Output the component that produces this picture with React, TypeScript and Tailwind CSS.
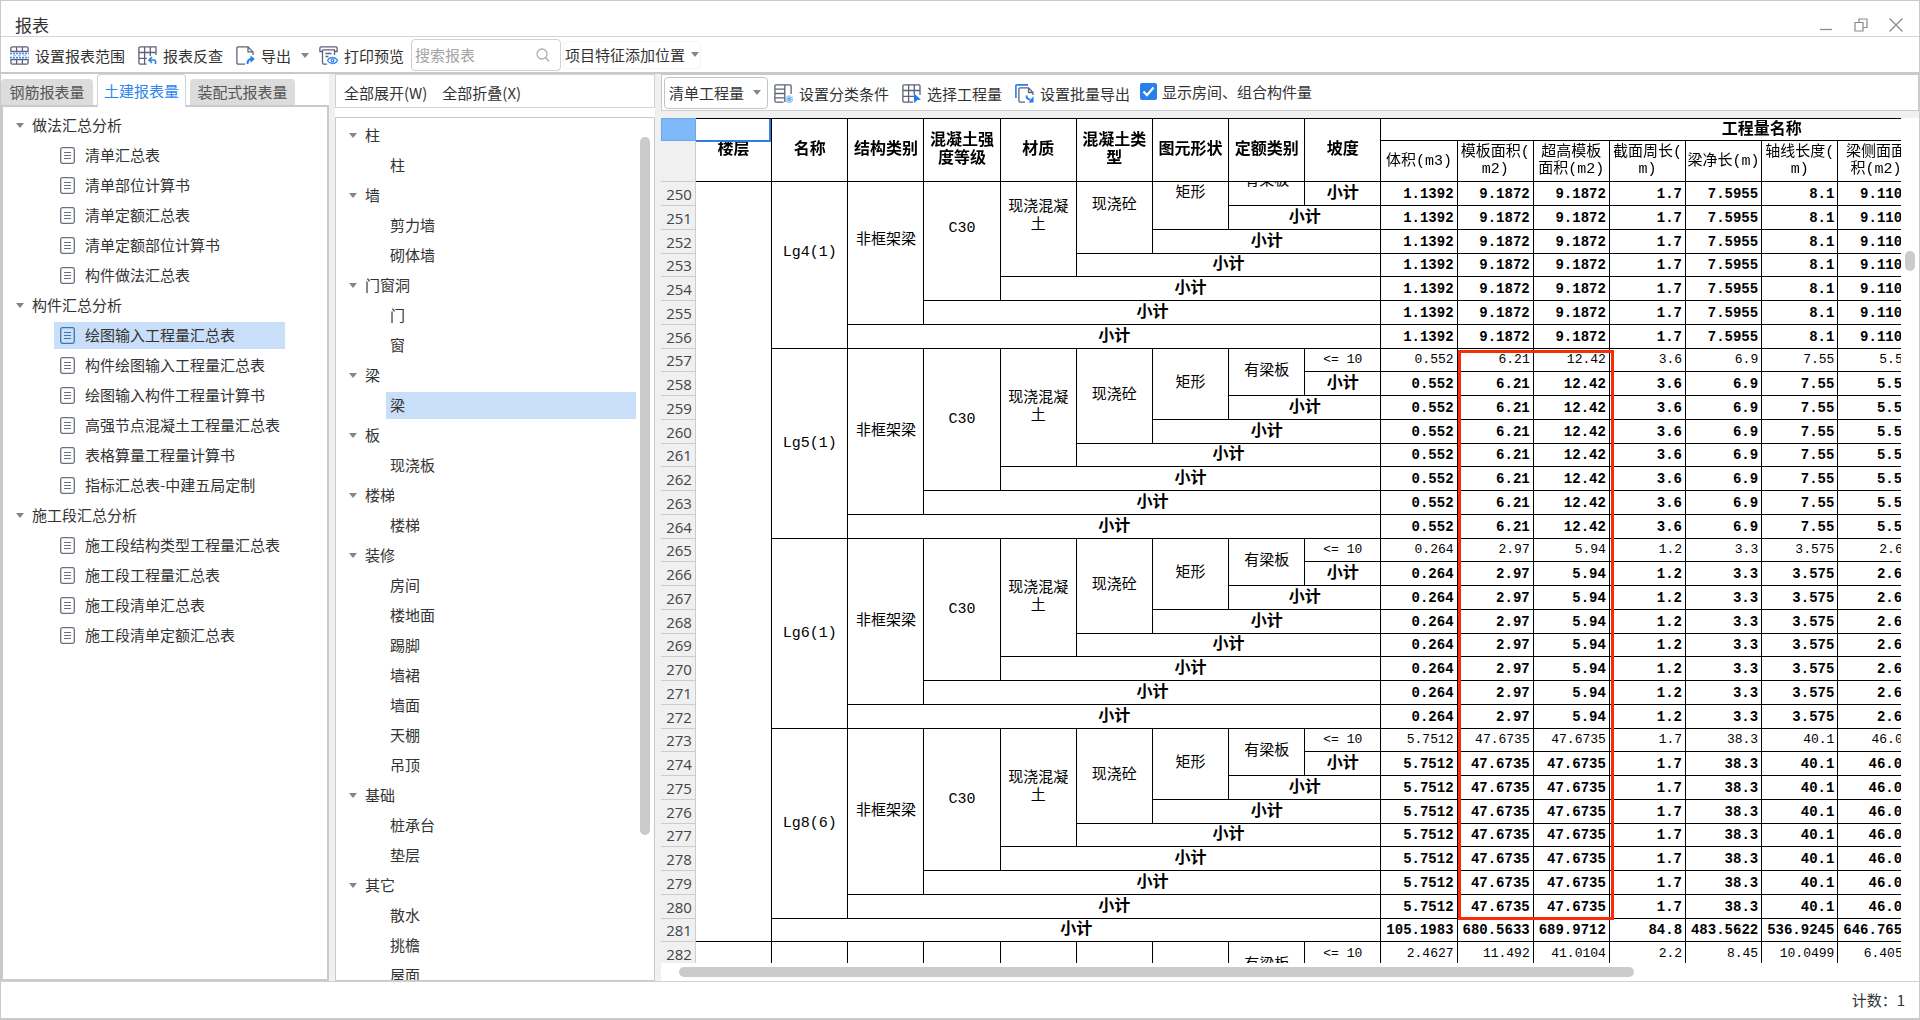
import * as React from "react";

type TreeGroup = { label: string; items: string[] };

const reportTree: TreeGroup[] = [
  {
    label: "做法汇总分析",
    items: ["清单汇总表", "清单部位计算书", "清单定额汇总表", "清单定额部位计算书", "构件做法汇总表"],
  },
  {
    label: "构件汇总分析",
    items: [
      "绘图输入工程量汇总表",
      "构件绘图输入工程量汇总表",
      "绘图输入构件工程量计算书",
      "高强节点混凝土工程量汇总表",
      "表格算量工程量计算书",
      "指标汇总表-中建五局定制",
    ],
  },
  {
    label: "施工段汇总分析",
    items: ["施工段结构类型工程量汇总表", "施工段工程量汇总表", "施工段清单汇总表", "施工段清单定额汇总表"],
  },
];

const componentTree: TreeGroup[] = [
  { label: "柱", items: ["柱"] },
  { label: "墙", items: ["剪力墙", "砌体墙"] },
  { label: "门窗洞", items: ["门", "窗"] },
  { label: "梁", items: ["梁"] },
  { label: "板", items: ["现浇板"] },
  { label: "楼梯", items: ["楼梯"] },
  { label: "装修", items: ["房间", "楼地面", "踢脚", "墙裙", "墙面", "天棚", "吊顶"] },
  { label: "基础", items: ["桩承台", "垫层"] },
  { label: "其它", items: ["散水", "挑檐", "屋面"] },
];

const groupHeaders = ["名称", "结构类别", "混凝土强度等级", "材质", "混凝土类型", "图元形状", "定额类别", "坡度"];

const valueHeaders = [
  "体积(m3)",
  "模板面积(m2)",
  "超高模板面积(m2)",
  "截面周长(m)",
  "梁净长(m)",
  "轴线长度(m)",
  "梁侧面面积(m2)",
];

const blocks = [
  { name: "Lg4(1)", values: ["1.1392", "9.1872", "9.1872", "1.7", "7.5955", "8.1", "9.1104"] },
  { name: "Lg5(1)", values: ["0.552", "6.21", "12.42", "3.6", "6.9", "7.55", "5.52"] },
  { name: "Lg6(1)", values: ["0.264", "2.97", "5.94", "1.2", "3.3", "3.575", "2.64"] },
  { name: "Lg8(6)", values: ["5.7512", "47.6735", "47.6735", "1.7", "38.3", "40.1", "46.02"] },
];

const floorTotal = ["105.1983", "680.5633", "689.9712", "84.8", "483.5622", "536.9245", "646.7654"];
const nextBlock = { name: "L1(1)", values: ["2.4627", "11.492", "41.0104", "2.2", "8.45", "10.0499", "6.4053"] };

const FIRST_ROW = 249;

const cell = "border-r border-b border-black p-0 text-center leading-[18px]";

function Caret({ className = "" }: { className?: string }) {
  return (
    <svg viewBox="0 0 8 5" className={`h-[5px] w-2 shrink-0 ${className}`} fill="#858585" aria-hidden="true">
      <path d="M0 0h8L4 5z" />
    </svg>
  );
}

function Icon({ children }: { children: React.ReactNode }) {
  return (
    <svg viewBox="0 0 19 19" className="size-[19px] shrink-0" fill="none" stroke="#5b6378" strokeWidth="1.3" aria-hidden="true">
      {children}
    </svg>
  );
}

function RangeIcon() {
  return (
    <Icon>
      <path d="M.9 6V2.200C.9 1.400 1.400.9 2.200.9h14.600c.8 0 1.300.5 1.300 1.300V6M.9 13v3.800c0 .8.500 1.300 1.300 1.300h14.600c.8 0 1.300-.5 1.300-1.300V13M6.600.9V6M12.400.9V6M6.600 13v5.100M12.400 13v5.100M1 5.500h17M1 13.500h17" />
      <path d="M0 7.500h19M0 11.500h19" stroke="#3d8bee" strokeDasharray="2 1" />
      <path d="M3 9.500h3M8 9.500h3M13 9.500h3" stroke="#a9cbf7" />
    </Icon>
  );
}

function TraceIcon() {
  return (
    <Icon>
      <path d="M18 9V.9H2.200C1.400.9.9 1.400.9 2.200v14.600c0 .8.500 1.300 1.300 1.300H8.500M.9 6.500H18M.9 12.300h8M6.600.9v17.200M12.300.9v9" />
      <path d="M17.500 18v-2.500c0-1-.5-1.500-1.500-1.500h-4.500M14 11l-3 3 3 3" stroke="#2b7de9" strokeWidth="1.6" />
    </Icon>
  );
}

function ExportIcon() {
  return (
    <Icon>
      <path d="M9 18.100H2.200c-.8 0-1.300-.5-1.300-1.300V2.200C.9 1.400 1.400.9 2.200.9H12l5 5V9M12 .9v5h5" />
      <path d="M11.500 18c0-3.500 1-5 4-5" stroke="#1f7bf0" strokeWidth="2" />
      <path d="M14.500 9.500l4.300 3.500-4.300 3.700z" fill="#1f7bf0" stroke="none" />
    </Icon>
  );
}

function PreviewIcon() {
  return (
    <Icon>
      <path d="M3.500 5.500H.9V2c0-.7.400-1.100 1.100-1.100h15c.7 0 1.100.4 1.100 1.100v3.500h-2.600M3.500 3.800h12V9M3.500 3.800v13c0 .8.500 1.300 1.300 1.300H8M6.500 7.500h6M6.500 10.500h3" />
      <path d="M8.500 14.500c2.500-4 7.500-4 10 0-2.500 4-7.500 4-10 0z" stroke="#3d8bee" />
      <circle cx="13.500" cy="14.500" r="1.300" stroke="#3d8bee" />
    </Icon>
  );
}

function ClassifyIcon() {
  return (
    <Icon>
      <path d="M9.500 18.100H2c-.7 0-1.100-.4-1.100-1.100V2C.9 1.300 1.300.9 2 .9h14c.7 0 1.100.4 1.100 1.100v8M10.800.9v17M.9 5.200h9.900M.9 9.500h9.900M.9 13.800h9.900" />
      <circle cx="15.200" cy="15.200" r="3" stroke="#8dbcf6" strokeWidth="2" strokeDasharray="1.400 .6" />
      <circle cx="15.200" cy="15.200" r="1.200" stroke="#5d9ff0" />
    </Icon>
  );
}

function PickIcon() {
  return (
    <Icon>
      <path d="M18 11V2c0-.7-.4-1.100-1.100-1.100H2C1.300.9.9 1.300.9 2v15c0 .7.400 1.100 1.100 1.100h9M.9 6.500H18M.9 12.300h11M6.600.9v17.200M12.300.9v10" />
      <path d="M12 9.500l7 6.300-3.600.2-3.400 3z" fill="#1f7bf0" stroke="none" />
    </Icon>
  );
}

function BatchIcon() {
  return (
    <Icon>
      <path d="M.9 14V2C.9 1.300 1.300.9 2 .9h11" stroke="#2b7de9" strokeWidth="1.600" />
      <path d="M10 18.100H5c-.7 0-1.100-.4-1.100-1.100V5c0-.7.400-1.100 1.100-1.100h8.500L18 8.500V11M13.500 4v4.500H18" />
      <path d="M11.500 11.500c0 3 1 4 4 4" stroke="#1f7bf0" strokeWidth="1.800" />
      <path d="M18.500 12v6.500h-5z" fill="#1f7bf0" stroke="none" />
    </Icon>
  );
}

function SheetIcon() {
  return (
    <svg viewBox="0 0 15 17" className="h-[17px] w-[15px] shrink-0" fill="none" stroke="currentColor" aria-hidden="true">
      <rect x=".7" y=".7" width="13.600" height="15.600" rx="1.800" strokeWidth="1.300" />
      <path d="M4 5.500h7M4 8.500h7M4 11.500h7" strokeWidth="1.200" />
    </svg>
  );
}

function ToolButton({ icon, children }: { icon?: React.ReactNode; children: React.ReactNode }) {
  return (
    <button type="button" className="flex shrink-0 items-center gap-1.5 whitespace-nowrap">
      {icon}
      {children}
    </button>
  );
}

function TitleBar() {
  return (
    <header className="flex h-9 shrink-0 items-center justify-between border-b border-[#d2d4d6] pt-3 pr-4 pl-3.5">
      <h1 className="text-[17px] leading-5">报表</h1>
      <div className="flex items-center gap-[21px] text-[#8a8a8a]">
        <button type="button" aria-label="最小化">
          <svg viewBox="0 0 14 14" className="size-3.5" fill="none" stroke="currentColor">
            <path d="M1 11.500h12" strokeWidth="1.300" />
          </svg>
        </button>
        <button type="button" aria-label="还原">
          <svg viewBox="0 0 14 14" className="size-3.5" fill="none" stroke="currentColor" strokeWidth="1.200">
            <path d="M1 4.500h8v8.500H1zM5 4.500V1h8v8.500H9" />
          </svg>
        </button>
        <button type="button" aria-label="关闭">
          <svg viewBox="0 0 14 14" className="size-3.5" fill="none" stroke="currentColor" strokeWidth="1.300">
            <path d="M.5.5l13 13M13.500.5l-13 13" />
          </svg>
        </button>
      </div>
    </header>
  );
}

function MainToolbar() {
  return (
    <div className="flex h-[37px] shrink-0 items-center border-b-2 border-[#c6c9cd] pl-[9px]">
      <div className="flex items-center gap-[13px] pt-0.5">
        <ToolButton icon={<RangeIcon />}>设置报表范围</ToolButton>
        <ToolButton icon={<TraceIcon />}>报表反查</ToolButton>
        <div className="flex items-center gap-2.5">
          <ToolButton icon={<ExportIcon />}>
            导出
            <Caret className="ml-1" />
          </ToolButton>
          <ToolButton icon={<PreviewIcon />}>打印预览</ToolButton>
        </div>
      </div>
      <div className="ml-[7px] flex h-8 w-[150px] items-center rounded border border-[#cfd1d4] pr-2.5 pl-[3px]">
        <input
          type="text"
          aria-label="搜索报表"
          placeholder="搜索报表"
          className="min-w-0 flex-1 bg-transparent outline-none placeholder:text-[#a3a3a3]"
        />
        <svg viewBox="0 0 14 14" className="size-3.5 shrink-0" fill="none" stroke="#b0b0b0" strokeWidth="1.300">
          <circle cx="6" cy="6" r="5" />
          <path d="M9.500 9.500l3.500 4" />
        </svg>
      </div>
      <button type="button" className="ml-0.5 flex h-7 items-center gap-1.5 rounded border border-[#f4f4f4] px-px whitespace-nowrap">
        项目特征添加位置
        <Caret />
      </button>
    </div>
  );
}

function ReportPanel() {
  const [selected, setSelected] = React.useState("绘图输入工程量汇总表");

  return (
    <section className="flex w-[328px] shrink-0 flex-col">
      <div role="tablist" className="flex h-[31px] shrink-0 items-end gap-1">
        <button role="tab" type="button" className="h-[26px] w-[92px] rounded-t bg-[#dcdcdc] text-[#555]">
          钢筋报表量
        </button>
        <button
          role="tab"
          type="button"
          aria-selected="true"
          className="z-10 -mb-0.5 h-[33px] w-[89px] rounded-t border border-b-0 border-[#cfd1d4] bg-white text-[#2b86ee]"
        >
          土建报表量
        </button>
        <button role="tab" type="button" className="h-[26px] w-[105px] rounded-t bg-[#dcdcdc] text-[#555]">
          装配式报表量
        </button>
      </div>
      <div className="min-h-0 flex-1 overflow-hidden border-2 border-[#c8cacc] pt-[3px]">
        {reportTree.map((group) => (
          <div key={group.label}>
            <button type="button" className="flex h-[30px] items-center gap-2 pl-[13px]">
              <Caret />
              {group.label}
            </button>
            <ul>
              {group.items.map((item) => (
                <li key={item} className="flex h-[30px] items-center pr-[42px] pl-[51px]">
                  <button
                    type="button"
                    onClick={() => setSelected(item)}
                    className={`flex h-[27px] w-full items-center gap-2.5 pl-1.5 whitespace-nowrap ${
                      item === selected ? "bg-[#c9dff9]" : ""
                    }`}
                  >
                    <span className={item === selected ? "text-[#3f74b0]" : "text-[#6b7080]"}>
                      <SheetIcon />
                    </span>
                    {item}
                  </button>
                </li>
              ))}
            </ul>
          </div>
        ))}
      </div>
    </section>
  );
}

function ComponentPanel() {
  const [selected, setSelected] = React.useState("梁/梁");

  return (
    <section className="flex w-80 shrink-0 flex-col gap-[9px]">
      <div className="flex h-[34px] shrink-0 items-center gap-[15px] border border-[#cfd1d4] pt-1 pl-2">
        <ToolButton>全部展开(W)</ToolButton>
        <ToolButton>全部折叠(X)</ToolButton>
      </div>
      <div className="flex min-h-0 flex-1 border border-[#c8cacc]">
        <div className="min-w-0 flex-1 overflow-hidden pt-0.5">
          {componentTree.map((group) => (
            <div key={group.label}>
              <button type="button" className="flex h-[30px] items-center gap-2 pl-[13px]">
                <Caret />
                {group.label}
              </button>
              <ul>
                {group.items.map((item) => (
                  <li key={item} className="flex h-[30px] items-center pl-[50px]">
                    <button
                      type="button"
                      onClick={() => setSelected(`${group.label}/${item}`)}
                      className={`h-[27px] w-full pl-1 text-left ${
                        `${group.label}/${item}` === selected ? "bg-[#c9dff9]" : ""
                      }`}
                    >
                      {item}
                    </button>
                  </li>
                ))}
              </ul>
            </div>
          ))}
        </div>
        <div className="mt-[19px] mr-1 ml-1 h-[81%] w-2.5 rounded-full bg-[#cbcbcb]" />
      </div>
    </section>
  );
}

function Values({ values, bold }: { values: string[]; bold: boolean }) {
  return (
    <>
      {values.map((value, i) => (
        <td
          key={i}
          className={`border-r border-b border-black p-0 pr-[3px] text-right leading-[18px] ${
            bold ? "text-[14px] font-bold" : "text-[13px]"
          }`}
        >
          {value}
        </td>
      ))}
      <td colSpan={3} className="border-b border-black p-0" />
    </>
  );
}

function GridRow({ no, children }: { no: number; children: React.ReactNode }) {
  const offset = no - FIRST_ROW;
  const short = offset > 0 && offset % 4 === 0;

  return (
    <tr className={short ? "h-[23px]" : "h-6"}>
      <th
        scope="row"
        className="border-r border-b border-[#cccccc] bg-[#f0f0f0] p-0 pl-0.5 font-['Open_Sans','Noto_Sans',sans-serif] text-[15px] leading-[18px] font-normal text-[#444]"
      >
        {no}
      </th>
      {children}
    </tr>
  );
}

function blockRows(block: { name: string; values: string[] }, start: number, floorSpan?: number) {
  const labels = [block.name, "非框架梁", "C30", "现浇混凝土", "现浇砼", "矩形", "有梁板", "<= 10"];

  return labels.map((_, k) => (
    <GridRow key={start + k} no={start + k}>
      {k === 0 && floorSpan && <td rowSpan={floorSpan} className={cell} />}
      {k === 0 ? (
        labels.map((label, i) => (
          <td
            key={label}
            rowSpan={8 - i}
            className={`border-r border-b border-black px-1 py-0 text-center leading-[18px] ${
              i === 7 ? "text-[13px]" : "text-[15px]"
            }`}
          >
            {label}
          </td>
        ))
      ) : (
        <td colSpan={k} className={`${cell} text-[16px] font-bold`}>
          小计
        </td>
      )}
      <Values values={block.values} bold={k > 0} />
    </GridRow>
  ));
}

function QuantityTable() {
  const scroller = React.useRef<HTMLDivElement>(null);

  // open one row down, the header stays pinned
  React.useLayoutEffect(() => {
    if (scroller.current) scroller.current.scrollTop = 24;
  }, []);

  return (
    <div ref={scroller} className="min-h-0 flex-1 overflow-hidden">
      <div className="relative w-[1482px]">
        <table className="w-full table-fixed border-separate border-spacing-0 font-['Liberation_Mono','Noto_Sans_CJK_SC',monospace] text-black">
          <colgroup>
            <col className="w-[35px]" />
            <col span={19} />
          </colgroup>
          <thead className="sticky top-0 z-10 bg-white text-[16px]">
            <tr className="h-[23px]">
              <th className="border border-[#6aa7f0] bg-[#80b9f9] p-0" />
              <th rowSpan={2} className={`relative border-t ${cell}`}>
                楼层
                <div className="absolute inset-x-0 top-0 h-[23px] border-r-2 border-b-2 border-[#2f7fe0] bg-white" />
              </th>
              {groupHeaders.map((label) => (
                <th key={label} rowSpan={2} className={`border-t ${cell}`}>
                  {label}
                </th>
              ))}
              <th colSpan={10} className={`border-t ${cell}`}>
                工程量名称
              </th>
            </tr>
            <tr className="h-[41px]">
              <th className="border-r border-b border-[#cccccc] bg-[#f0f0f0] p-0" />
              {valueHeaders.map((label) => (
                <th
                  key={label}
                  className="border-r border-b border-black px-px py-0 text-center text-[15px] leading-[17px] font-normal [line-break:anywhere]"
                >
                  {label}
                </th>
              ))}
              <th colSpan={3} className="border-b border-black p-0" />
            </tr>
          </thead>
          <tbody>
            {blocks.map((block, i) => blockRows(block, FIRST_ROW + i * 8, i === 0 ? 33 : undefined))}
            <GridRow no={281}>
              <td colSpan={8} className={`${cell} text-[16px] font-bold`}>
                小计
              </td>
              <Values values={floorTotal} bold />
            </GridRow>
            {blockRows(nextBlock, 282, 8)}
          </tbody>
        </table>
        <div className="pointer-events-none absolute top-[256px] left-[797px] h-[570px] w-[156px] border-[3px] border-[#f92c0a]" />
      </div>
    </div>
  );
}

function QuantityPanel() {
  return (
    <section className="flex min-w-0 flex-1 flex-col">
      <div className="flex h-[37px] shrink-0 items-center border border-[#c8cacc] pl-0.5">
        <div className="relative flex h-8 w-[104px] items-center rounded border border-[#c4c4c4]">
          <select aria-label="工程量类型" className="h-full w-full appearance-none bg-transparent pl-1 outline-none">
            <option>清单工程量</option>
            <option>定额工程量</option>
          </select>
          <Caret className="pointer-events-none absolute right-1.5" />
        </div>
        <div className="ml-1.5 flex items-center gap-[13px] pt-0.5">
          <ToolButton icon={<ClassifyIcon />}>设置分类条件</ToolButton>
          <ToolButton icon={<PickIcon />}>选择工程量</ToolButton>
          <ToolButton icon={<BatchIcon />}>设置批量导出</ToolButton>
        </div>
        <label className="ml-2.5 flex items-center gap-[5px] pb-0.5 whitespace-nowrap">
          <span className="relative flex size-[17px]">
            <input type="checkbox" defaultChecked className="peer size-[17px] appearance-none rounded-xs bg-[#2a80e8]" />
            <svg viewBox="0 0 17 17" className="pointer-events-none absolute inset-0" fill="none" stroke="#fff" strokeWidth="2.200">
              <path d="M3.500 8.500l3.500 3.700 6.500-7.700" />
            </svg>
          </span>
          显示房间、组合构件量
        </label>
      </div>
      <div className="h-[7px] shrink-0 bg-[#f0f0f0]" />
      <div className="flex min-h-0 flex-1">
        <div className="flex min-w-0 flex-1 flex-col">
          <QuantityTable />
          <div className="mt-1 mb-1 ml-[18px] h-2.5 w-[77%] shrink-0 rounded-full bg-[#cbcbcb]" />
        </div>
        <div className="w-[18px] shrink-0 pt-[133px] pl-1">
          <div className="h-5 w-2.5 rounded-full bg-[#cbcbcb]" />
        </div>
      </div>
    </section>
  );
}

export default function App() {
  return (
    <div className="flex h-screen flex-col overflow-hidden border border-b-2 border-[#c8cacc] bg-white font-['Noto_Sans_CJK_SC',sans-serif] text-[15px] leading-5 text-[#333]">
      <TitleBar />
      <MainToolbar />
      <main className="flex min-h-0 flex-1">
        <ReportPanel />
        <div className="w-1.5 shrink-0 bg-[#f0f0f0]" />
        <ComponentPanel />
        <div className="w-1.5 shrink-0 bg-[#f0f0f0]" />
        <QuantityPanel />
      </main>
      <footer className="flex h-[37px] shrink-0 items-center justify-end border-t border-[#cfd1d4] pr-3.5">
        计数：1
      </footer>
    </div>
  );
}
